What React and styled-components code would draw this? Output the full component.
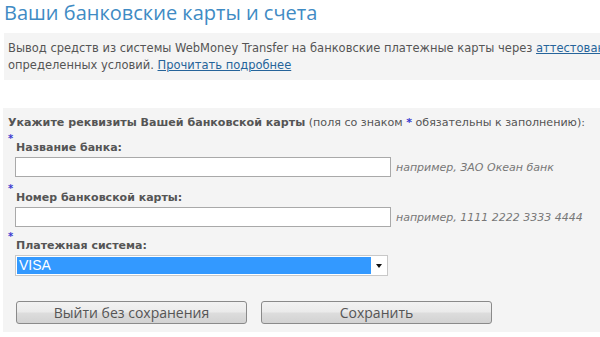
import React from "react";
import styled, { createGlobalStyle } from "styled-components";

const Global = createGlobalStyle`
  body {
    margin: 0;
    background: #fff;
    font-family: "DejaVu Sans", Verdana, sans-serif;
    overflow: hidden;
  }
`;

const Page = styled.div`
  width: 600px;
  height: 337px;
  overflow: hidden;
  padding-left: 4px;
  box-sizing: border-box;
`;

const Title = styled.h1`
  margin: 0;
  height: 30px;
  font-family: "Open Sans", sans-serif;
  font-weight: 400;
  font-size: 20px;
  line-height: 25px;
  color: #3f8bc4;
  white-space: nowrap;
`;

const InfoBox = styled.div`
  margin-top: 3px;
  background: #f4f4f4;
  padding: 7px 4px 6px 4px;
  font-size: 11.5px;
  line-height: 17px;
  color: #555;
  white-space: nowrap;
  overflow: hidden;
  width: 596px;
  box-sizing: border-box;
`;

const Link = styled.a`
  color: #26649a;
  text-decoration: underline;
`;

const FormBox = styled.div`
  margin-top: 28px;
  margin-left: -1px;
  background: #f4f4f4;
  padding: 6px 5px 8px 5px;
  font-size: 11.1px;
  color: #555;
  width: 620px;
`;

const Lead = styled.div`
  line-height: 17px;
  white-space: nowrap;
  b {
    font-weight: bold;
  }
`;

const Star = styled.span`
  color: #3b3bd0;
  font-weight: bold;
`;

const Field = styled.div`
  margin-top: ${(p) => p.$top || 0}px;
`;

const StarMark = styled.div`
  color: #3b3bd0;
  font-size: 10px;
  line-height: 7px;
  height: 5px;
  font-weight: bold;
`;

const Label = styled.div`
  margin-left: 8px;
  font-weight: bold;
  font-size: 11px;
  line-height: 15px;
  color: #555;
`;

const Row = styled.div`
  display: flex;
  align-items: center;
  margin-top: 2px;
  margin-left: 7px;
`;

const Input = styled.input`
  width: 376px;
  height: 20px;
  box-sizing: border-box;
  border: 1px solid #a9a9a9;
  background: #fff;
  margin: 0;
  padding: 0 3px;
`;

const Hint = styled.span`
  margin-left: 5px;
  font-style: italic;
  font-size: 11px;
  color: #777;
  white-space: nowrap;
`;

const Select = styled.div`
  width: 373px;
  height: 21px;
  box-sizing: border-box;
  border: 1px solid #c8c8c8;
  background: #fff;
  display: flex;
  padding: 1px;
`;

const SelectValue = styled.div`
  flex: 1;
  background: #3399ff;
  color: #fff;
  font-family: "Liberation Sans", Arial, sans-serif;
  font-size: 14px;
  line-height: 17px;
  padding-left: 2px;
`;

const Arrow = styled.div`
  width: 15px;
  display: flex;
  align-items: center;
  justify-content: center;
  &::after {
    content: "";
    border-left: 3px solid transparent;
    border-right: 3px solid transparent;
    border-top: 4px solid #111;
  }
`;

const Buttons = styled.div`
  display: flex;
  gap: 14px;
  margin-top: 25px;
  margin-left: 8px;
`;

const Button = styled.button`
  width: 231px;
  height: 23px;
  box-sizing: border-box;
  border: 1px solid #8a8a8a;
  border-radius: 3px;
  background: linear-gradient(#f2f2f2 0%, #ebebeb 45%, #dcdcdc 55%, #d2d2d2 100%);
  font-family: "Open Sans", sans-serif;
  font-size: 14px;
  color: #555;
  padding: 0;
  line-height: 20px;
`;

export default function App() {
  return (
    <Page>
      <Global />
      <Title>Ваши банковские карты и счета</Title>
      <InfoBox>
        Вывод средств из системы WebMoney Transfer на банковские платежные карты через{" "}
        <Link>аттестованных банков-партнеров</Link>
        <br />
        определенных условий. <Link>Прочитать подробнее</Link>
      </InfoBox>
      <FormBox>
        <Lead>
          <b>Укажите реквизиты Вашей банковской карты</b> (поля со знаком <Star>*</Star> обязательны к заполнению):
        </Lead>
        <Field $top={4}>
          <StarMark>*</StarMark>
          <Label>Название банка:</Label>
          <Row>
            <Input />
            <Hint>например, ЗАО Океан банк</Hint>
          </Row>
        </Field>
        <Field $top={8}>
          <StarMark>*</StarMark>
          <Label>Номер банковской карты:</Label>
          <Row>
            <Input />
            <Hint>например, 1111 2222 3333 4444</Hint>
          </Row>
        </Field>
        <Field $top={6}>
          <StarMark>*</StarMark>
          <Label>Платежная система:</Label>
          <Row>
            <Select>
              <SelectValue>VISA</SelectValue>
              <Arrow />
            </Select>
          </Row>
        </Field>
        <Buttons>
          <Button>Выйти без сохранения</Button>
          <Button>Сохранить</Button>
        </Buttons>
      </FormBox>
    </Page>
  );
}
